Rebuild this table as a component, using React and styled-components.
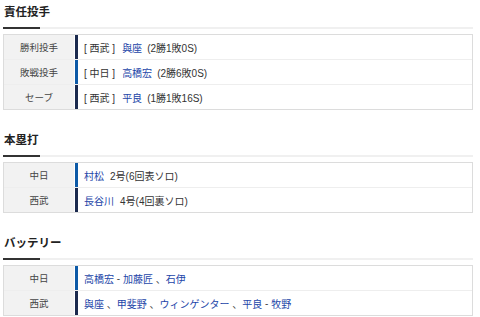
import React from 'react'
import styled, { createGlobalStyle } from 'styled-components'

const GlobalStyle = createGlobalStyle`
  body {
    margin: 0;
    background: #fff;
    font-family: "Liberation Sans", "Noto Sans CJK JP", sans-serif;
    color: #333;
  }
`

const TEAM_COLORS = {
  西武: '#1b2a4e',
  中日: '#0d5aa7',
}

const Page = styled.div`
  padding: 1px 7px 0 3px;
`

const Section = styled.section`
  margin-top: ${props => props.gap || 0}px;
`

const Heading = styled.h2`
  position: relative;
  margin: 0 0 5px;
  padding: 1px 0 5px 1px;
  font-size: 11.5px;
  font-weight: bold;
  line-height: 20px;
  color: #222;
  border-bottom: 2px solid #f0f0f0;

  &::after {
    content: '';
    position: absolute;
    left: 0;
    bottom: -2px;
    width: 37px;
    height: 2px;
    background: #333;
  }
`

const Table = styled.div`
  border: 1px solid #dcdcdc;
`

const Row = styled.div`
  display: grid;
  grid-template-columns: 70px 1fr;
  column-gap: 1px;
  height: 24px;
  border-top: 1px solid #eeeeee;

  &:first-child {
    border-top: none;
  }
`

const Label = styled.div`
  display: flex;
  align-items: center;
  justify-content: center;
  background: #f2f2f2;
  font-size: 9.5px;
  color: #444;
`

const Content = styled.div`
  display: flex;
  align-items: center;
  border-left: 3px solid ${props => props.$bar};
  padding-left: 6px;
  font-size: 10px;
  color: #333;
  white-space: pre;
`

const Name = styled.span`
  color: #2345a8;
`

const Team = styled.span`
  margin-right: 7px;
`

const Note = styled.span`
  margin-left: ${props => props.$gap || 5}px;
`

const Sep = styled.span`
  color: #444;
`

const pitchers = [
  { label: '勝利投手', team: '西武', name: '與座', note: '(2勝1敗0S)' },
  { label: '敗戦投手', team: '中日', name: '高橋宏', note: '(2勝6敗0S)' },
  { label: 'セーブ', team: '西武', name: '平良', note: '(1勝1敗16S)' },
]

const homers = [
  { team: '中日', name: '村松', note: '2号(6回表ソロ)' },
  { team: '西武', name: '長谷川', note: '4号(4回裏ソロ)' },
]

const battery = [
  { team: '中日', parts: ['高橋宏', ' - ', '加藤匠', ' 、', '石伊'] },
  { team: '西武', parts: ['與座', ' 、', '甲斐野', ' 、', 'ウィンゲンター', ' 、', '平良', ' - ', '牧野'] },
]

export default function App() {
  return (
    <Page>
      <GlobalStyle />
      <Section>
        <Heading>責任投手</Heading>
        <Table>
          {pitchers.map(p => (
            <Row key={p.label}>
              <Label>{p.label}</Label>
              <Content $bar={TEAM_COLORS[p.team]}>
                <Team>[ {p.team} ]</Team>
                <Name>{p.name}</Name>
                <Note>{p.note}</Note>
              </Content>
            </Row>
          ))}
        </Table>
      </Section>

      <Section gap={19}>
        <Heading>本塁打</Heading>
        <Table>
          {homers.map(h => (
            <Row key={h.team}>
              <Label>{h.team}</Label>
              <Content $bar={TEAM_COLORS[h.team]}>
                <Name>{h.name}</Name>
                <Note $gap={6}>{h.note}</Note>
              </Content>
            </Row>
          ))}
        </Table>
      </Section>

      <Section gap={19}>
        <Heading>バッテリー</Heading>
        <Table>
          {battery.map(b => (
            <Row key={b.team}>
              <Label>{b.team}</Label>
              <Content $bar={TEAM_COLORS[b.team]}>
                {b.parts.map((part, i) =>
                  i % 2 === 0 ? <Name key={i}>{part}</Name> : <Sep key={i}>{part}</Sep>
                )}
              </Content>
            </Row>
          ))}
        </Table>
      </Section>
    </Page>
  )
}
